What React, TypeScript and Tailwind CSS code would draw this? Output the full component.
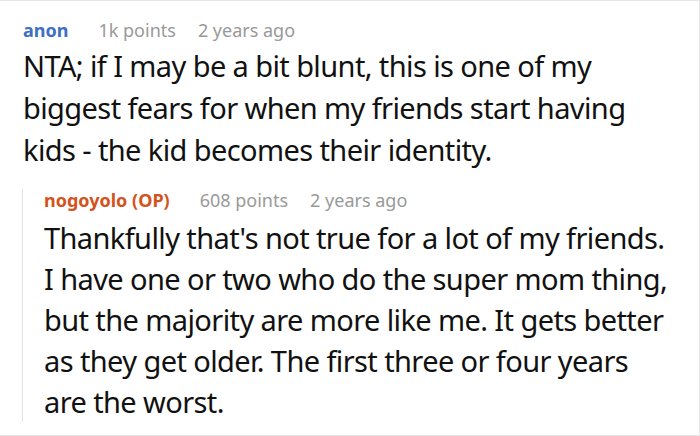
export default function App() {
  return (
    <div className="w-[700px] h-[436px] bg-white border border-[#e6e6e6] border-l-0 overflow-hidden font-['Noto_Sans',sans-serif]">
      <div className="pl-[22px] pr-[10px] pt-[18px]">
        {/* Top comment */}
        <div className="flex items-center text-[18px] leading-[22px] pl-px">
          <span className="font-bold text-[#3e6fc2] mr-[30px]">anon</span>
          <span className="text-[#999999] mr-[22px]">1k points</span>
          <span className="text-[#999999]">2 years ago</span>
        </div>
        <p className="text-[29px] tracking-[-0.6px] leading-[42px] text-[#111] mt-[4px] pl-px">
          NTA; if I may be a bit blunt, this is one of my
          <br />
          biggest fears for when my friends start having
          <br />
          kids - the kid becomes their identity.
        </p>

        {/* Reply */}
        <div className="mt-[18px] border-l border-[#e2e2e2] pl-[21px]">
          <div className="flex items-center text-[18px] leading-[22px]">
            <span className="font-bold text-[#d4521c] mr-[30px]">nogoyolo (OP)</span>
            <span className="text-[#999999] mr-[22px]">608 points</span>
            <span className="text-[#999999]">2 years ago</span>
          </div>
          <p className="text-[29px] tracking-[-0.6px] leading-[41px] text-[#111] mt-[6px] whitespace-nowrap">
            Thankfully that's not true for a lot of my friends.
            <br />
            I have one or two who do the super mom thing,
            <br />
            but the majority are more like me. It gets better
            <br />
            as they get older. The first three or four years
            <br />
            are the worst.
          </p>
        </div>
      </div>
    </div>
  );
}
